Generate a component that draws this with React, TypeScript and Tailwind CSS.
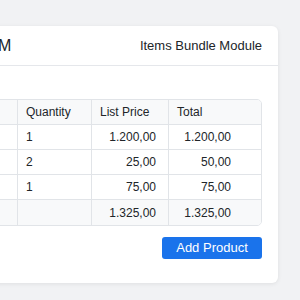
import React from 'react';

type Line = {
	id: number;
	qty: number;
	price: string;
	total: string;
};

const lines: Line[] = [
	{ id: 1, qty: 1, price: '1.200,00', total: '1.200,00' },
	{ id: 2, qty: 2, price: '25,00', total: '50,00' },
	{ id: 3, qty: 1, price: '75,00', total: '75,00' },
];

const cell = 'border-r border-b border-[#e1e4e8] h-[25px] px-2 text-[12px] text-[#212529]';

export default function App() {
	return (
		<div
			className="min-h-[300px] w-[300px] overflow-hidden bg-[#f1f2f4] pt-[26px]"
			style={{ fontFamily: '"Liberation Sans", Arial, sans-serif' }}
		>
			<div className="ml-[-155px] w-[433px] rounded-[6px] bg-white shadow-[0_1px_4px_rgba(0,0,0,0.08)]">
				<div className="flex h-[40px] items-center justify-between border-b border-[#e5e7eb] px-4">
					<h2 className="text-[16px] text-[#212529]">Product Bundle BOM</h2>
					<span className="text-[13px] text-[#212529]">Items Bundle Module</span>
				</div>
				<div className="px-4 pt-[33px] pb-[24px]">
					<div className="overflow-hidden rounded-[5px] border border-[#e1e4e8]">
						<table className="w-full table-fixed border-separate border-spacing-0">
							<colgroup>
								<col className="w-[156px]" />
								<col className="w-[74px]" />
								<col className="w-[77px]" />
								<col />
							</colgroup>
							<thead>
								<tr className="bg-[#f8f9fa] text-left">
									<th className={`${cell} font-normal`} />
									<th className={`${cell} font-normal`}>Quantity</th>
									<th className={`${cell} font-normal`}>List Price</th>
									<th className={`${cell} border-r-0 font-normal`}>Total</th>
								</tr>
							</thead>
							<tbody>
								{lines.map((l) => (
									<tr key={l.id}>
										<td className={cell} />
										<td className={cell}>{l.qty}</td>
										<td className={`${cell} pr-3 text-right`}>{l.price}</td>
										<td className={`${cell} border-r-0 pr-[30px] text-right`}>{l.total}</td>
									</tr>
								))}
								<tr className="bg-[#f8f9fa]">
									<td className={`${cell} border-b-0`} />
									<td className={`${cell} border-b-0`} />
									<td className={`${cell} border-b-0 pr-3 text-right`}>1.325,00</td>
									<td className={`${cell} border-r-0 border-b-0 pr-[30px] text-right`}>1.325,00</td>
								</tr>
							</tbody>
						</table>
					</div>
					<div className="mt-[11px] flex justify-end">
						<button className="h-[22px] w-[100px] rounded-[3px] bg-[#1a73eb] text-[13px] text-white">
							Add Product
						</button>
					</div>
				</div>
			</div>
		</div>
	);
}
